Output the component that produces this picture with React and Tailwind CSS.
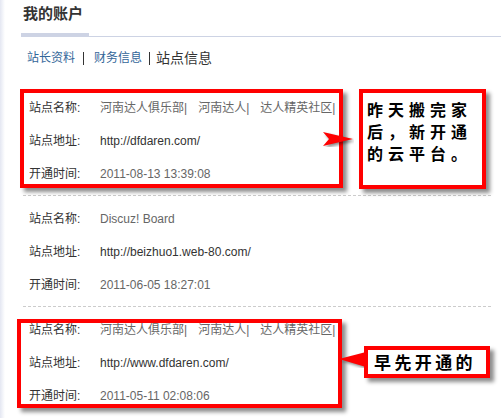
import React from "react";

const sites = [
  {
    names: ["河南达人俱乐部", "河南达人", "达人精英社区"],
    url: "http://dfdaren.com/",
    time: "2011-08-13 13:39:08",
  },
  {
    names: ["Discuz! Board"],
    plain: true,
    url: "http://beizhuo1.web-80.com/",
    time: "2011-06-05 18:27:01",
  },
  {
    names: ["河南达人俱乐部", "河南达人", "达人精英社区"],
    url: "http://www.dfdaren.com/",
    time: "2011-05-11 02:08:06",
  },
];

const Row = ({ label, children }) => (
  <div className="h-[33px] flex items-center">
    <span className="w-[77px] shrink-0 pl-[6px] text-[#333]">{label}</span>
    {children}
  </div>
);

const App = () => {
  return (
    <div
      className="relative w-[501px] h-[418px] bg-white flex overflow-hidden text-[12px]"
      style={{ fontFamily: '"Liberation Sans", "Noto Sans CJK SC", sans-serif' }}
    >
      {/* left page edge */}
      <div className="w-[5px] shrink-0 bg-gradient-to-r from-[#e4e7f2] to-white" />

      <div className="flex-1 pl-[16px]">
        <div className="h-[33px] pt-[5px] pl-[2px] text-[15px] leading-[17px] font-bold text-[#333]">
          我的账户
        </div>
        <div className="h-[4px] border-b border-[#cdd3e4]">
          <div className="w-[68px] h-[3px] bg-[#cdd3e4]" />
        </div>

        {/* tabs */}
        <div className="mt-[11px] h-[20px] flex items-center pl-[6px]">
          <span className="text-[#336699] leading-[14px]">站长资料</span>
          <span className="ml-[8px] inline-block w-px h-[13px] bg-[#333]" />
          <span className="ml-[10px] text-[#336699] leading-[14px]">财务信息</span>
          <span className="ml-[7px] inline-block w-px h-[13px] bg-[#333]" />
          <span className="ml-[6px] text-[14px] text-[#333] leading-[16px]">站点信息</span>
        </div>

        {/* site list */}
        <div className="mt-[17px] ml-[2px] mr-[10px]">
          {sites.map((s, i) => (
            <div
              key={i}
              className={`h-[111px] pt-[6px] ${i < 2 ? "border-b border-dashed border-[#cccccc]" : ""}`}
            >
              <Row label="站点名称:">
                <span className="flex text-[#666] whitespace-nowrap">
                  {s.names.map((n, j) =>
                    s.plain ? (
                      <span key={j}>{n}</span>
                    ) : (
                      <span key={j} className="mr-[11px]">
                        {n}|
                      </span>
                    )
                  )}
                </span>
              </Row>
              <Row label="站点地址:">
                <span className="text-[#333]">{s.url}</span>
              </Row>
              <Row label="开通时间:">
                <span className="text-[#666]">{s.time}</span>
              </Row>
            </div>
          ))}
        </div>
      </div>

      {/* annotations */}
      <div className="absolute left-[20px] top-[89px] w-[323px] h-[99px] border-4 border-[#ff0000] shadow-[4px_4px_4px_rgba(0,0,0,0.45)]" />
      <svg className="absolute left-[323px] top-[131px]" width="31" height="16" viewBox="0 0 31 16">
        <polygon points="0,1 30,8 0,15 6,8" fill="#ff0000" style={{ filter: "drop-shadow(2px 2px 1.5px rgba(0,0,0,0.45))" }} />
      </svg>
      <div
        className="absolute left-[359px] top-[89px] w-[127px] h-[100px] border-4 border-[#ff0000] bg-white shadow-[4px_4px_4px_rgba(0,0,0,0.45)] pl-[4px] pt-[5px] text-[16px] leading-[22px] font-bold tracking-[5px] text-black whitespace-nowrap"
        style={{ fontFamily: '"Noto Sans CJK SC", sans-serif' }}
      >
        <div>昨天搬完家</div>
        <div>后，新开通</div>
        <div>的云平台。</div>
      </div>

      <div className="absolute left-[17px] top-[319px] w-[325px] h-[89px] border-4 border-[#ff0000] shadow-[4px_4px_4px_rgba(0,0,0,0.45)]" />
      <svg className="absolute left-[339px] top-[351px]" width="28" height="17" viewBox="0 0 28 17">
        <polygon points="0,8 27,1 27,16" fill="#ff0000" style={{ filter: "drop-shadow(2px 2px 1.5px rgba(0,0,0,0.45))" }} />
      </svg>
      <div
        className="absolute left-[364px] top-[346px] w-[126px] h-[32px] border-4 border-[#ff0000] bg-white shadow-[4px_4px_4px_rgba(0,0,0,0.45)] pl-[6px] flex items-center text-[17px] font-bold tracking-[3.4px] text-black whitespace-nowrap"
        style={{ fontFamily: '"Noto Sans CJK SC", sans-serif' }}
      >
        早先开通的
      </div>
    </div>
  );
};

export default App;
